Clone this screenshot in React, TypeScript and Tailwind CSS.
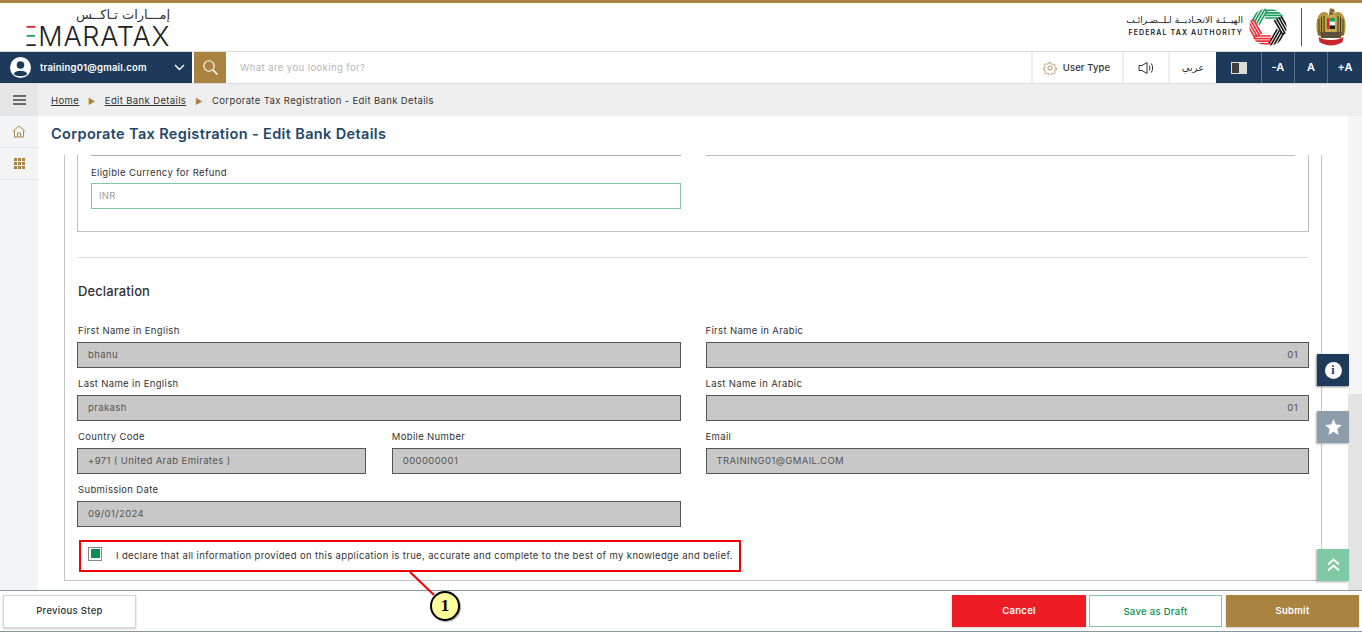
import React from "react";

const NAVY = "#1e3a5a";

function FtaLogo() {
  const blades: { a: number; c: string }[] = [
    { a: -60, c: "#1f9d5c" },
    { a: 0, c: "#1f9d5c" },
    { a: 60, c: "#1a1a1a" },
    { a: 120, c: "#1a1a1a" },
    { a: 180, c: "#ee2a35" },
    { a: 240, c: "#ee2a35" },
  ];
  return (
    <svg width="38" height="38" viewBox="-20 -20 40 40" fill="none">
      <defs>
        <clipPath id="ring">
          <circle r="19.6" />
        </clipPath>
      </defs>
      <g clipPath="url(#ring)">
        {blades.map((s, i) => (
          <g key={i} transform={`rotate(${s.a})`} stroke={s.c} strokeWidth="1.7">
            <path d="M-3 -9.5 L15 -9.5" />
            <path d="M-3 -12.2 L17 -12.2" />
            <path d="M-3 -14.9 L17 -14.9" />
            <path d="M-3 -17.6 L17 -17.6" />
          </g>
        ))}
      </g>
    </svg>
  );
}

function Emblem() {
  return (
    <svg width="30" height="38" viewBox="0 0 30 38" fill="none">
      <path d="M14 0.5 C17 0 19 1.5 19 3.5 L17.5 4.5 L18 8 L12.5 8 Z" fill="#8a6d2a" />
      <path d="M12 5 C6 2 2.5 6 1 12 C-0.2 18 0.5 24 2.5 28 L10 28 L11.5 9 Z" fill="#b3953f" />
      <path d="M18 5 C24 2 27.5 6 29 12 C30.2 18 29.5 24 27.5 28 L20 28 L18.5 9 Z" fill="#b3953f" />
      <path d="M3 11 V27 M5.5 9 V27 M8 8 V27 M22 8 V27 M24.5 9 V27 M27 11 V27" stroke="#3d3420" strokeWidth="0.9" />
      <rect x="9.5" y="7" width="11" height="18" rx="2" fill="#c9a94f" />
      <rect x="11" y="10" width="8" height="11" fill="#fff" />
      <rect x="11" y="10" width="2.6" height="11" fill="#d8232a" />
      <rect x="13.6" y="10" width="5.4" height="3.6" fill="#1f9d5c" />
      <rect x="13.6" y="17.4" width="5.4" height="3.6" fill="#222" />
      <path d="M4 24 H26 L25 30 H5 Z" fill="#5c5138" />
      <path d="M2.5 29 C8 33 22 33 27.5 29 L26.5 34 C20 38.5 10 38.5 3.5 34 Z" fill="#c6262e" />
    </svg>
  );
}

function Label({ children, inset }: { children: React.ReactNode; inset?: boolean }) {
  return (
    <div className={`text-[9.5px] leading-[13px] tracking-[0.35px] text-[#333] ${inset ? "pl-px" : ""}`}>{children}</div>
  );
}

function Field({ label, value, right, inset }: { label: string; value: string; right?: boolean; inset?: boolean }) {
  return (
    <div className="flex flex-col gap-[5px] min-w-0">
      <Label inset={inset}>{label}</Label>
      <div
        className={`h-[26px] border border-[#555] bg-[#c8c8c8] px-[10px] pt-px flex items-center text-[9.5px] tracking-[0.4px] text-[#555] ${
          right ? "justify-end" : ""
        }`}
      >
        {value}
      </div>
    </div>
  );
}

export default function App() {
  return (
    <div
      className="relative h-[632px] w-[1362px] overflow-hidden bg-white flex flex-col text-[#333]"
      style={{ fontFamily: "Inter, 'DejaVu Sans', sans-serif" }}
    >
      <div className="h-[3px] bg-[#aa8340] shrink-0" />

      {/* Logo header */}
      <header className="h-[48px] shrink-0 flex items-center justify-between pl-[25px] pr-[16px]">
        <div className="flex flex-col items-end w-[145px] gap-[4px]">
          <div className="text-[13px] leading-[15px] text-[#333] font-['DejaVu_Sans',sans-serif]" dir="rtl">
            إمـــارات تـاكــس
          </div>
          <div className="flex items-center text-[27px] leading-[22px] font-light tracking-[0.75px] text-[#231f20]">
            <span className="bg-[linear-gradient(#d8232a_0%,#d8232a_32%,#1f9d5c_32%,#1f9d5c_64%,#231f20_64%,#231f20_100%)] bg-clip-text text-transparent [clip-path:inset(0_0_0_5px)]">
              E
            </span>
            <span>MARATAX</span>
          </div>
        </div>
        <div className="flex items-center">
          <div className="flex flex-col items-end mr-[6px] -mt-[2px]">
            <div className="text-[9px] leading-[12px] text-[#222] font-['DejaVu_Sans',sans-serif]" dir="rtl">
              الهيــئـة الاتحـاديــة لـلــضـرائـب
            </div>
            <div className="text-[7px] leading-[10px] tracking-[1.15px] font-semibold text-[#222] mt-[2px]">FEDERAL TAX AUTHORITY</div>
          </div>
          <FtaLogo />
          <div className="w-px h-[38px] bg-[#555] ml-[14px] mr-[14px]" />
          <Emblem />
        </div>
      </header>

      {/* Toolbar */}
      <div className="h-[33px] shrink-0 flex border-y border-[#dcdcdc] text-[#333]">
        <div className="w-[192px] flex items-center pl-[10px] pr-[6px]" style={{ background: NAVY }}>
          <svg width="21" height="21" viewBox="0 0 21 21">
            <circle cx="10.5" cy="10.5" r="10.5" fill="#fff" />
            <circle cx="10.5" cy="8" r="3.8" fill={NAVY} />
            <path d="M3.8 17 C5 12.8 16 12.8 17.2 17 C15 20 6 20 3.8 17 Z" fill={NAVY} />
          </svg>
          <span className="ml-[9px] pt-[2px] text-[9.5px] font-semibold tracking-[0.2px] text-white">training01@gmail.com</span>
          <svg className="ml-auto mr-[1px]" width="11" height="7" viewBox="0 0 11 7" fill="none">
            <path d="M1 1 L5.5 5.5 L10 1" stroke="#fff" strokeWidth="1.4" />
          </svg>
        </div>
        <div className="w-[32px] ml-[2px] flex items-center justify-center bg-[#aa8340]">
          <svg width="17" height="17" viewBox="0 0 17 17" fill="none" stroke="#fff">
            <circle cx="7" cy="7" r="5.2" strokeWidth="1.1" />
            <path d="M11 11 L15.5 15.5" strokeWidth="1.6" />
          </svg>
        </div>
        <div className="flex-1 flex items-center pl-[14px] pt-[2px] text-[9.5px] tracking-[0.42px] text-[#b5b5b5]">What are you looking for?</div>
        <div className="w-[91px] border-l-2 border-[#eee] flex items-center justify-center gap-[6px] pr-[2px] text-[9.5px] font-medium tracking-[0.1px]">
          <svg width="14" height="14" viewBox="0 0 24 24" fill="none" stroke="#b08a50" strokeWidth="1.6">
            <circle cx="12" cy="12" r="3.5" />
            <path d="M10 1.5h4l.8 3 2.6 1.1 2.7-1.6 2.8 2.9-1.6 2.6 1.1 2.6 3 .8v-.9 3l-3 .8-1.1 2.6 1.6 2.6-2.8 2.9-2.7-1.6-2.6 1.1-.8 3h-4l-.8-3-2.6-1.1-2.7 1.6-2.8-2.9 1.6-2.6-1.1-2.6-3-.8v-3l3-.8 1.1-2.6-1.6-2.6 2.8-2.9 2.7 1.6 2.6-1.1z" transform="translate(1.6 1.6) scale(.86)" />
          </svg>
          <span className="pt-[1px]">User Type</span>
        </div>
        <div className="w-[46px] border-l-2 border-[#eee] flex items-center justify-center">
          <svg width="17" height="14" viewBox="0 0 17 14" fill="none" stroke="#333" strokeWidth="1">
            <path d="M1 4.5 H4 L9 1.5 V12.5 L4 9.5 H1 Z" />
            <path d="M11.2 4.5 C12 6 12 8 11.2 9.5" />
            <path d="M13.3 2.5 C15 5 15 9 13.3 11.5" />
          </svg>
        </div>
        <div className="w-[48px] border-l-2 border-[#eee] flex items-center justify-center text-[10px] font-['DejaVu_Sans',sans-serif]">
          عربي
        </div>
        <div className="w-[45px] flex items-center justify-center" style={{ background: NAVY }}>
          <div className="flex w-[16px] h-[12px] bg-[#dcdcdc] p-px">
            <div className="w-1/2 bg-[#3f3f3f]" />
          </div>
        </div>
        {[
          { t: "-A", w: "w-[33px]" },
          { t: "A", w: "w-[33px]" },
          { t: "+A", w: "w-[35px]" },
        ].map(({ t, w }) => (
          <div
            key={t}
            className={`${w} border-l border-[#5b7088] flex items-center justify-center text-[11px] font-semibold text-white`}
            style={{ background: NAVY }}
          >
            {t}
          </div>
        ))}
      </div>

      <div className="flex-1 min-h-0 flex">
        {/* Sidebar */}
        <aside className="w-[38px] shrink-0 bg-[#f2f4f6] flex flex-col">
          <div className="h-[32px] bg-[#e6e6e6] flex items-center justify-center">
            <svg width="13" height="10" viewBox="0 0 13 10" stroke="#444" strokeWidth="1.3">
              <path d="M0 1 H13 M0 5 H13 M0 9 H13" />
            </svg>
          </div>
          <div className="h-[32px] border-b border-[#e4e4e4] flex items-center justify-center">
            <svg width="14" height="13" viewBox="0 0 14 13" fill="none" stroke="#b08a50" strokeWidth="1">
              <path d="M0.7 6.5 L7 1 L13.3 6.5 M2.5 5.5 V12 H11.5 V5.5 M5.5 12 V8 H8.5 V12" />
            </svg>
          </div>
          <div className="h-[32px] border-b border-[#e4e4e4] flex items-center justify-center">
            <div className="grid grid-cols-3 gap-px">
              {Array.from({ length: 9 }).map((_, i) => (
                <div key={i} className="w-[3px] h-[3px] bg-[#aa8340]" />
              ))}
            </div>
          </div>
        </aside>

        <div className="flex-1 min-w-0 flex flex-col">
          {/* Breadcrumb */}
          <nav className="h-[32px] shrink-0 bg-[#efefef] flex items-center pl-[13px] pt-[2px] text-[9.5px] tracking-[0.37px] text-[#333]">
            <span className="underline">Home</span>
            <span className="mx-[9px] text-[8px] text-[#aa8340]">►</span>
            <span className="underline">Edit Bank Details</span>
            <span className="mx-[9px] text-[8px] text-[#aa8340]">►</span>
            <span>Corporate Tax Registration - Edit Bank Details</span>
          </nav>

          <div className="flex-1 min-h-0 flex">
            <div className="w-[1310px] shrink-0 flex flex-col">
              <h1 className="shrink-0 h-[39px] pl-[13px] pb-[3px] flex items-center text-[14.5px] font-semibold tracking-[0.36px] text-[#23476b]">
                Corporate Tax Registration - Edit Bank Details
              </h1>

              {/* Scrolled form frame */}
              <div className="w-[1258px] ml-[26px] border-x border-b border-[#c4c4c4] h-[426px] px-[12px] box-border shrink-0">
                {/* Bank box */}
                <div className="h-[77px] border-x border-b border-[#bdbdbd] px-[13px] relative">
                  <div className="grid grid-cols-2 gap-x-[25px]">
                    <div className="border-t border-[#a9b5ad] pt-[10px]">
                      <Label>Eligible Currency for Refund</Label>
                      <div className="mt-[4px] h-[26px] border border-[#7fc8a5] px-[7px] flex items-center text-[9.5px] text-[#999] tracking-[0.3px]">INR</div>
                    </div>
                    <div className="border-t border-[#bdbdbd]" />
                  </div>
                </div>
                <div className="mt-[25px] border-t border-[#dedede]" />
                <h2 className="mt-[24px] pl-px text-[13px] leading-[18px] font-medium tracking-[0.1px] text-[#333]">Declaration</h2>

                <div className="mt-[24px] grid grid-cols-2 gap-x-[25px] gap-y-[9px]">
                  <Field inset label="First Name in English" value="bhanu" />
                  <Field label="First Name in Arabic" value="01" right />
                  <Field inset label="Last Name in English" value="prakash" />
                  <Field label="Last Name in Arabic" value="01" right />
                  <div className="grid grid-cols-2 gap-x-[26px]">
                    <Field inset label="Country Code" value="+971 ( United Arab Emirates )" />
                    <Field label="Mobile Number" value="000000001" />
                  </div>
                  <Field label="Email" value="TRAINING01@GMAIL.COM" />
                  <Field inset label="Submission Date" value="09/01/2024" />
                </div>

                <div className="mt-[13px] ml-[2px] w-[662px] h-[32px] border-2 border-[#f00000] flex items-center pl-[7px]">
                  <div className="-mt-[5px] w-[14px] h-[14px] border border-[#888] bg-white flex items-center justify-center">
                    <div className="w-[9px] h-[9px] bg-[#0a8f50]" />
                  </div>
                  <span className="ml-[14px] text-[9.5px] tracking-[0.36px] text-[#333]">
                    I declare that all information provided on this application is true, accurate and complete to the best of my knowledge and belief.
                  </span>
                </div>
              </div>
            </div>

            {/* Scrollbar */}
            <div className="w-[14px] shrink-0 flex flex-col">
              <div className="h-[278px] bg-[#f5f5f5]" />
              <div className="flex-1 bg-[#e3e3e3]" />
            </div>
          </div>
        </div>
      </div>

      {/* Footer */}
      <footer className="h-[42px] shrink-0 border-y border-[#8b959c] bg-white flex items-center px-[3px]">
        <button className="w-[133px] h-[33px] border border-[#d5d5d5] shadow-[0_1px_2px_rgba(0,0,0,0.2)] text-[9.5px] font-medium tracking-[0.3px] text-[#333]">
          Previous Step
        </button>
        <button className="ml-auto w-[134px] h-[32px] bg-[#ee1c25] shadow-[0_1px_2px_rgba(0,0,0,0.2)] text-[9.5px] font-semibold tracking-[0.3px] text-white">
          Cancel
        </button>
        <button className="ml-[3px] w-[133px] h-[32px] border border-[#7fc8a5] text-[9.5px] font-medium tracking-[0.3px] text-[#0a8f50] pt-[3px]">
          Save as Draft
        </button>
        <button className="ml-[4px] w-[133px] h-[32px] bg-[#aa8340] shadow-[0_1px_2px_rgba(0,0,0,0.2)] text-[9.5px] font-semibold tracking-[0.3px] text-white">
          Submit
        </button>
      </footer>

      {/* Floating side buttons */}
      <div className="absolute left-[1317px] top-[354px] w-[32px] h-[32px] flex items-center justify-center shadow-[-1px_1px_2px_rgba(0,0,0,0.45)]" style={{ background: NAVY }}>
        <div className="w-[17px] h-[17px] rounded-full bg-white flex items-center justify-center text-[12px] font-bold font-['Liberation_Serif',serif] text-[#1e3a5a]">i</div>
      </div>
      <div className="absolute left-[1317px] top-[411px] w-[32px] h-[32px] bg-[#8d9dac] flex items-center justify-center shadow-[-1px_1px_2px_rgba(0,0,0,0.3)]">
        <svg width="17" height="16" viewBox="0 0 24 23" fill="#fff">
          <path d="M12 0 L15.4 8 L24 8.8 L17.5 14.5 L19.4 23 L12 18.5 L4.6 23 L6.5 14.5 L0 8.8 L8.6 8 Z" />
        </svg>
      </div>
      <div className="absolute left-[1317px] top-[549px] w-[32px] h-[32px] bg-[#80c9a5] flex items-center justify-center shadow-[-1px_1px_2px_rgba(0,0,0,0.3)]">
        <svg width="13" height="14" viewBox="0 0 13 14" fill="none" stroke="#fff" strokeWidth="1.8">
          <path d="M1 6.5 L6.5 1.5 L12 6.5 M1 12.5 L6.5 7.5 L12 12.5" />
        </svg>
      </div>

      {/* Callout */}
      <svg className="absolute left-[400px] top-[565px]" width="40" height="35" fill="none">
        <path d="M10 7 L34 30" stroke="#f00000" strokeWidth="2" />
      </svg>
      <div className="absolute left-[430px] top-[591px] w-[30px] h-[30px] rounded-full bg-[#ffff99] border-2 border-black shadow-[1px_1px_1px_rgba(0,0,0,0.4)] flex items-center justify-center text-[17px] font-bold font-['Liberation_Serif',serif] text-black">
        1
      </div>
    </div>
  );
}
